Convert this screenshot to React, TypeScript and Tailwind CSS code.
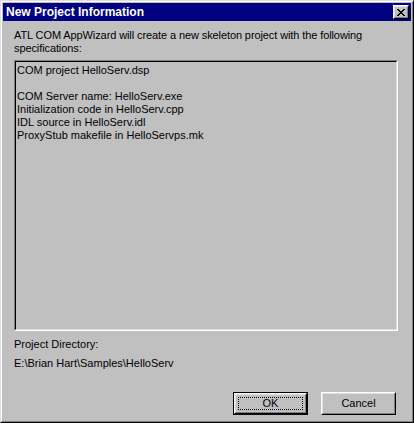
const specLines = [
  'COM project HelloServ.dsp',
  '',
  'COM Server name: HelloServ.exe',
  'Initialization code in HelloServ.cpp',
  'IDL source in HelloServ.idl',
  'ProxyStub makefile in HelloServps.mk',
]

function CloseButton() {
  return (
    <div className="w-[16px] h-[14px] border border-t-white border-l-white border-r-black border-b-black bg-[#c0c0c0]">
      <div className="w-full h-full border border-t-[#dfdfdf] border-l-[#dfdfdf] border-r-[#808080] border-b-[#808080] flex items-center justify-center">
        <svg width="8" height="7" viewBox="0 0 8 7" shapeRendering="crispEdges">
          <path d="M0 0h2v1h-2zM6 0h2v1h-2zM1 1h2v1h-2zM5 1h2v1h-2zM2 2h4v1h-4zM3 3h2v1h-2zM2 4h4v1h-4zM1 5h2v1h-2zM5 5h2v1h-2zM0 6h2v1h-2zM6 6h2v1h-2z" fill="#000" />
        </svg>
      </div>
    </div>
  )
}

function Button({ label, isDefault }: { label: string; isDefault?: boolean }) {
  return (
    <div className={`w-[75px] h-[23px] ${isDefault ? 'border border-black' : ''}`}>
      <div className="w-full h-full border border-t-white border-l-white border-r-black border-b-black">
        <div className="w-full h-full border border-t-[#dfdfdf] border-l-[#dfdfdf] border-r-[#808080] border-b-[#808080] flex items-center justify-center p-[2px]">
          <div className={`w-full h-full flex items-center justify-center ${isDefault ? 'border border-dotted border-black' : ''}`}>
            {label}
          </div>
        </div>
      </div>
    </div>
  )
}

export default function App() {
  return (
    <div className="w-[414px] h-[423px] bg-[#c0c0c0] text-black text-[11px] leading-[13px] font-['Liberation_Sans',Arial,sans-serif]">
      <div className="w-full h-full border border-t-[#dfdfdf] border-l-[#dfdfdf] border-r-black border-b-black">
        <div className="w-full h-full border border-t-white border-l-white border-r-[#808080] border-b-[#808080] p-[1px] flex flex-col">
          {/* Title bar */}
          <div className="h-[18px] bg-[#000080] flex items-center justify-between pl-[3px] pr-[2px]">
            <span className="text-white font-bold text-[12px]">New Project Information</span>
            <CloseButton />
          </div>

          <div className="flex flex-col pl-[11px] pr-[13px]">
            <p className="mt-[8px] pr-[20px] tracking-[-0.1px]">
              ATL COM AppWizard will create a new skeleton project with the following specifications:
            </p>

            {/* Spec box */}
            <div className="mt-[5px] h-[271px] border border-t-[#808080] border-l-[#808080] border-r-white border-b-white">
              <div className="w-full h-full border border-t-black border-l-black border-r-[#dfdfdf] border-b-[#dfdfdf] pl-[1px] pt-[2px]">
                {specLines.map((line, i) => (
                  <div key={i} className="h-[13px]">{line}</div>
                ))}
              </div>
            </div>

            <div className="mt-[7px]">Project Directory:</div>
            <div className="mt-[6px]">E:\Brian Hart\Samples\HelloServ</div>

            <div className="mt-[22px] flex justify-end gap-[13px] pr-[2px]">
              <Button label="OK" isDefault />
              <Button label="Cancel" />
            </div>
          </div>
        </div>
      </div>
    </div>
  )
}
